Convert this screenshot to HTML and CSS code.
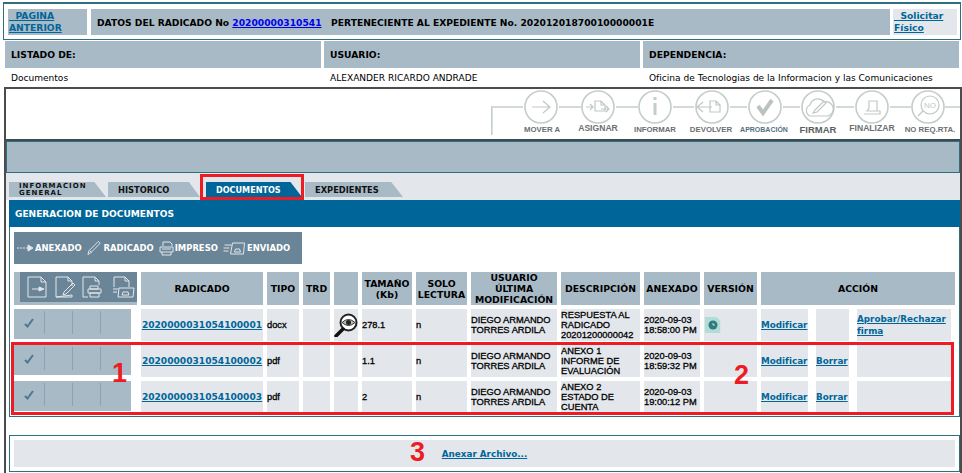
FILE: index.html
```html
<!DOCTYPE html>
<html lang="es">
<head>
<meta charset="utf-8">
<title>Documentos</title>
<link rel="stylesheet" href="styles.css">
</head>
<body>
<header class="top-box">
  <div class="top-cell nav-cell"><a href="#" class="link">&nbsp;&nbsp;PAGINA ANTERIOR</a></div>
  <div class="top-cell title-cell"><span>DATOS DEL RADICADO No <a href="#" class="blue-link">20200000310541</a>&nbsp;&nbsp; PERTENECIENTE AL EXPEDIENTE No. 20201201870010000001E</span></div>
  <div class="top-cell phys-cell"><a href="#" class="link">&nbsp;&nbsp;Solicitar Físico</a></div>
</header>
<section class="meta">
  <div class="meta-head">LISTADO DE:</div>
  <div class="meta-head">USUARIO:</div>
  <div class="meta-head">DEPENDENCIA:</div>
  <div class="meta-val">Documentos</div>
  <div class="meta-val">ALEXANDER RICARDO ANDRADE</div>
  <div class="meta-val">Oficina de Tecnologias de la Informacion y las Comunicaciones</div>
</section>
<main class="frame">
  <div class="toolbar">
    <svg class="tool-svg" width="469" height="50" viewBox="0 0 469 50">
      <g class="tl">
        <path d="M0.800 46V18H32M68 18H90M125 18H147M182 18H203M239 18H256M292 18H309M345 18H363M399 18H420M454 18H469"/>
        <circle cx="50" cy="18" r="16"/><circle cx="107" cy="18" r="16"/><circle cx="164" cy="18" r="16"/><circle cx="221" cy="18" r="16"/>
        <circle cx="274" cy="18" r="16"/><circle cx="327" cy="18" r="16"/><circle cx="381" cy="18" r="16"/><circle cx="437" cy="18" r="16"/>
      </g>
      <g class="ti">
        <path d="M41 18H58M52 12l7 6-7 6"/>
        <path d="M95 18h7M99 15l3 3-3 3M104 22V12h6l4 4v6zM110 12v4h4M110 20h7M115 17l3 3-3 3"/>
        <path d="M221 18h-14M212 13l-6 5 6 5M219 23V12h6l4 4v7zM225 12v4h4"/>
        <path class="heavy" d="M267 17l5 7 9-13"/>
        <path d="M319 27a6 6 0 0 1 0-11 8 8 0 0 1 14-3 6 6 0 0 1 4 14zM322 24l2-3 9-9 2 2-9 9z"/>
        <path d="M373 25h16v-3h-13l2-3v-7h8v10"/>
        <circle cx="439" cy="16" r="9"/><path d="M432 22l-5 5"/>
      </g>
      <rect class="info" x="162.500" y="14" width="3" height="12"/><rect class="info" x="162.500" y="8" width="3" height="3"/>
      <text class="no-txt" x="439" y="19">NO</text>
      <text class="tt" x="51" y="43">MOVER A</text>
      <text class="tt wider" x="107" y="42">ASIGNAR</text>
      <text class="tt" x="164" y="43">INFORMAR</text>
      <text class="tt" x="220" y="43">DEVOLVER</text>
      <text class="tt small" x="273" y="43">APROBACIÓN</text>
      <text class="tt big" x="327" y="44">FIRMAR</text>
      <text class="tt wider" x="381" y="42">FINALIZAR</text>
      <text class="tt" x="439" y="43">NO REQ.RTA.</text>
    </svg>
  </div>
  <div class="band"></div>
  <nav class="tabs">
    <a class="tab tab-a two-line">INFORMACION GENERAL</a>
    <a class="tab tab-b">HISTORICO</a>
    <a class="tab tab-c active">DOCUMENTOS</a>
    <a class="tab tab-d">EXPEDIENTES</a>
  </nav>
  <div class="panel">
    <h2 class="panel-title">GENERACION DE DOCUMENTOS</h2>
    <div class="panel-body">
      <div class="legend">
        <svg class="lg" width="17" height="14" viewBox="0 0 17 14"><path d="M0 7h11" stroke-dasharray="2 1"/><path class="fill" d="M11 4l5 3-5 3z"/></svg><span>ANEXADO</span>
        <svg class="lg" width="16" height="16" viewBox="0 0 17 16"><path d="M1 15l3-2 10-10-2-2L2 11zM3 11l2 2"/></svg><span>RADICADO</span>
        <svg class="lg" width="15" height="15" viewBox="0 0 15 15"><path d="M4 5V1h7l2 2v2M1 6h13v5H1zM3 11v3h9v-3M3 8h9"/></svg><span>IMPRESO</span>
        <svg class="lg" width="23" height="13" viewBox="0 0 22 13"><path d="M1 3h7M0 6h6M0 9h5M9 1h12l-1 11H7zM11 10l1-3h4l1 3z"/></svg><span>ENVIADO</span>
      </div>
      <table class="docs">
        <colgroup>
          <col class="c1"><col class="c2"><col class="c3"><col class="c4"><col class="c5"><col class="c6">
          <col class="c7"><col class="c8"><col class="c9"><col class="c10"><col class="c11"><col class="c12">
        </colgroup>
        <thead>
          <tr>
            <th class="state-head"><div class="state-icons">
              <svg class="si-a" width="20" height="22" viewBox="0 0 20 22"><path d="M1 1h13l5 5v15H1zM14 1v5h5M5 13h8"/><path class="fill" d="M12 11l5 2-5 2z"/></svg>
              <svg class="si-b" width="23" height="22" viewBox="0 0 23 22"><path d="M1 1h12l4 4v5M17 19v2H1zM1 1v20M13 1v4h4M8 19l3-1 9-9-2-2-9 9z"/></svg>
              <svg class="si-c" width="22" height="22" viewBox="0 0 22 22"><path d="M1 1v20h5M1 1h12l4 4v4M13 1v4h4M8 10h8v3H8zM6 13h13v4H6zM8 17h9v4H8z"/></svg>
              <svg class="si-d" width="23" height="22" viewBox="0 0 23 22"><path d="M2 11V1h11l4 4v6M13 1v4h4M1 13h5M1 16h4M7 12h15l-1 9H6zM10 19l1-3h5l1 3z"/></svg>
            </div></th>
            <th>RADICADO</th><th>TIPO</th><th>TRD</th><th></th><th>TAMAÑO (Kb)</th><th>SOLO LECTURA</th>
            <th>USUARIO ÚLTIMA MODIFICACIÓN</th><th>DESCRIPCIÓN</th><th>ANEXADO</th><th>VERSIÓN</th><th>ACCIÓN</th>
          </tr>
        </thead>
        <tbody>
          <tr>
            <td class="state"><div class="state-row"><span class="seg"><svg width="10" height="10" viewBox="0 0 10 10"><path d="M1 6l2.500 2.500L9 1"/></svg></span><span class="seg"></span><span class="seg"></span><span class="seg"></span></div></td>
            <td class="rad"><a href="#" class="link">2020000031054100001</a></td><td>docx</td><td></td>
            <td class="eye"><svg width="24" height="24" viewBox="0 0 24 24"><circle class="ring" cx="14.500" cy="9.500" r="8"/><path class="eye-l" d="M8 9.500q6.500-6 13 0q-6.500 6-13 0z"/><circle class="pupil" cx="14.500" cy="9.500" r="2.500"/><path class="handle" d="M9 16l-7 7"/></svg></td>
            <td>278.1</td><td>n</td><td>DIEGO ARMANDO TORRES ARDILA</td><td>RESPUESTA AL RADICADO 20201200000042</td><td>2020-09-03<br>18:58:00 PM</td>
            <td class="ver"><svg width="18" height="18" viewBox="0 0 18 20"><path class="v-doc" d="M0 1h13l4 4v14H0z"/><circle class="v-dot" cx="9" cy="10" r="5"/><path class="v-hand" d="M9 8v2h2"/></svg></td>
            <td class="actions"><div class="action-row"><span class="act a1"><a href="#" class="link">Modificar</a></span><span class="act a2"></span><span class="act a3"><a href="#" class="link">Aprobar/Rechazar firma</a></span></div></td>
          </tr>
          <tr>
            <td class="state"><div class="state-row"><span class="seg"><svg width="10" height="10" viewBox="0 0 10 10"><path d="M1 6l2.500 2.500L9 1"/></svg></span><span class="seg"></span><span class="seg"></span><span class="seg"></span></div></td>
            <td class="rad"><a href="#" class="link">2020000031054100002</a></td><td>pdf</td><td></td><td></td>
            <td>1.1</td><td>n</td><td>DIEGO ARMANDO TORRES ARDILA</td><td>ANEXO 1 INFORME DE EVALUACIÓN</td><td>2020-09-03<br>18:59:32 PM</td><td></td>
            <td class="actions"><div class="action-row"><span class="act a1"><a href="#" class="link">Modificar</a></span><span class="act a2"><a href="#" class="link">Borrar</a></span><span class="act a3"></span></div></td>
          </tr>
          <tr>
            <td class="state"><div class="state-row"><span class="seg"><svg width="10" height="10" viewBox="0 0 10 10"><path d="M1 6l2.500 2.500L9 1"/></svg></span><span class="seg"></span><span class="seg"></span><span class="seg"></span></div></td>
            <td class="rad"><a href="#" class="link">2020000031054100003</a></td><td>pdf</td><td></td><td></td>
            <td>2</td><td>n</td><td>DIEGO ARMANDO TORRES ARDILA</td><td>ANEXO 2 ESTADO DE CUENTA</td><td>2020-09-03<br>19:00:12 PM</td><td></td>
            <td class="actions"><div class="action-row"><span class="act a1"><a href="#" class="link">Modificar</a></span><span class="act a2"><a href="#" class="link">Borrar</a></span><span class="act a3"></span></div></td>
          </tr>
        </tbody>
      </table>
    </div>
    <div class="attach"><div class="attach-bar"><a href="#" class="link">Anexar Archivo...</a></div></div>
  </div>
</main>
<div class="mark tab-mark"></div>
<div class="mark rows-mark"></div>
<span class="num n1">1</span>
<span class="num n2">2</span>
<span class="num n3">3</span>
</body>
</html>
```
FILE: styles.css
```css
html, body { margin: 0; padding: 0; }
body {
  position: relative;
  width: 962px;
  height: 473px;
  overflow: hidden;
  background: #fff;
  color: #000;
  font-family: "DejaVu Sans", Verdana, sans-serif;
  font-size: 9.200px;
}
a { cursor: pointer; }
.link { color: #006699; font-weight: bold; text-decoration: underline; }
.blue-link { color: #0000ee; font-weight: bold; text-decoration: underline; }

.top-box {
  box-sizing: border-box;
  display: grid;
  grid-template-columns: 79px 799px 63px;
  column-gap: 4px;
  height: 38px;
  margin: 2px 1px 1px 3px;
  padding: 5px 0 4px 4px;
  border: 1px solid #2f6f7e;
  border-top: 2px solid #2f6f7e;
}
.top-cell { display: flex; align-items: center; font-weight: bold; background: #a8bac6; }
.nav-cell a, .phys-cell a { line-height: 12px; }
.title-cell { padding-left: 6px; white-space: nowrap; font-size: 9.170px; }
.phys-cell { background: #e3e7eb; padding-left: 1px; margin-left: -1px; }
.nav-cell { padding-left: 1px; }

.meta {
  display: grid;
  grid-template-columns: 316px 316px 316px;
  column-gap: 3px;
  grid-template-rows: 27px 19px;
  padding-left: 5px;
}
.meta-head { display: flex; align-items: center; padding-left: 6px; background: #a8bac6; font-weight: bold; }
.meta-val { display: flex; align-items: center; padding-left: 6px; font-size: 9.050px; }

.frame {
  box-sizing: border-box;
  height: 400px;
  margin: 0 0 0 4px;
  border: 2px solid #4c4c4c;
  border-bottom: 0;
}
.toolbar { display: flex; justify-content: flex-end; height: 50px; border-bottom: 2px solid #3e4a4f; }
.tool-svg { display: block; }
.tl path, .tl circle { fill: #fff; stroke: #c3cdc9; stroke-width: 1.600; }
.ti path, .ti circle { fill: none; stroke: #c0c8c6; stroke-width: 1.200; }
.ti .heavy { stroke-width: 4; stroke: #bac3c0; }
.info { fill: #c3cdc9; }
.no-txt { font: 8px "Liberation Sans", sans-serif; fill: #c0c8c6; text-anchor: middle; }
.tt { font: bold 7.800px "Liberation Sans", sans-serif; fill: #6b6f70; text-anchor: middle; }
.tt.wider { font-size: 8.600px; }
.tt.small { font-size: 7px; fill: #55707f; }
.tt.big { font-size: 9.500px; fill: #5a5f62; }

.band { box-sizing: border-box; height: 32px; background: #a8bac6; border: 1px solid #2f6f7e; }
.tabs {
  display: flex;
  align-items: flex-end;
  height: 27px;
  padding: 0 0 3px 3px;
  box-sizing: border-box;
  background: #e3e7eb;
}
.tab {
  display: flex;
  align-items: center;
  box-sizing: border-box;
  height: 15px;
  padding-left: 10px;
  background: #a8bac6;
  clip-path: polygon(0 0, 88% 0, 100% 100%, 0 100%);
  font-size: 8.300px;
  font-weight: bold;
  color: #111;
}
.two-line { font-size: 7px; line-height: 7px; letter-spacing: 1px; }
.tab-a { width: 97px; margin-right: 2px; }
.tab-b { width: 92px; margin-right: 6px; }
.tab-c { width: 96px; margin-right: 3px; background: #006699; color: #fff; font-size: 8.100px; }
.tab-d { width: 98px; }

.panel { margin-left: 3px; }
.panel-title {
  display: flex;
  align-items: center;
  height: 27px;
  margin: 0;
  padding-left: 6px;
  background: #006699;
  color: #fff;
  font-size: 9.050px;
  font-weight: bold;
}
.panel-body {
  box-sizing: border-box;
  width: 951px;
  padding-top: 5px;
  border: 1px solid #2f6f7e;
  border-top: 0;
}
.legend {
  display: flex;
  align-items: center;
  gap: 1px;
  width: 288px;
  height: 32px;
  margin: 0 0 0 4px;
  padding-left: 3px;
  box-sizing: border-box;
  background: #6a8597;
  color: #fff;
  font-size: 8.450px;
  font-weight: bold;
}
.legend span { margin-right: 4px; }
.lg { flex: none; }
.lg path { fill: none; stroke: #e3e7eb; stroke-width: 1; }
.lg .fill, .state-icons .fill { fill: #e3e7eb; }
.docs {
  table-layout: fixed;
  width: 949px;
  margin-top: 4px;
  border-spacing: 4px;
  border-collapse: separate;
}
.c1 { width: 123px; } .c2 { width: 122px; } .c3 { width: 32px; } .c4 { width: 27px; }
.c5 { width: 24px; } .c6 { width: 50px; } .c7 { width: 51px; } .c8 { width: 86px; }
.c9 { width: 79px; } .c10 { width: 56px; } .c11 { width: 53px; } .c12 { width: 194px; }
.docs th {
  height: 33px;
  padding: 0;
  background: #a8bac6;
  font-size: 9.300px;
  line-height: 11px;
  font-weight: bold;
}
.docs th.state-head { vertical-align: top; }
.docs td {
  height: 32px;
  padding: 0;
  background: #e3e7eb;
  font-family: "Liberation Sans", Arial, sans-serif;
  font-size: 9.300px;
  line-height: 10px;
  -webkit-text-stroke: 0.300px #000;
  vertical-align: middle;
}
.docs tbody tr:last-child td { height: 31px; }
.docs td .link { -webkit-text-stroke: 0; font-family: "DejaVu Sans", Verdana, sans-serif; }
.docs td.rad { text-align: center; }
.rad .link { font-size: 9.100px; }
.state-icons {
  display: flex;
  align-items: center;
  height: 30px;
  margin-left: 6px;
  padding-left: 7px;
  box-sizing: border-box;
  background: #6a8597;
}
.state-icons svg { flex: none; }
.si-b { margin-left: 8px; }
.si-c { margin-left: 4px; }
.si-d { margin-left: 8px; }
.state-icons path { fill: none; stroke: #e3e7eb; stroke-width: 1; }
.docs td.state { background: transparent; vertical-align: top; }
.state-row { display: grid; grid-template-columns: 31px 28px 28px 30px; width: 117px; height: 30px; background: #a8bac6; }
.seg { display: flex; align-items: center; justify-content: center; margin: 2px 0 5px; border-right: 1px solid #8ba3b3; }
.seg:last-child { border-right: 0; }
.seg svg path { fill: none; stroke: #4f7690; stroke-width: 2; }
.docs td.eye svg, .docs td.ver svg { display: block; }
.ring { fill: #fff; stroke: #222; stroke-width: 2; }
.eye-l { fill: #bbb; stroke: #333; }
.pupil { fill: #222; }
.handle { stroke: #111; stroke-width: 3.500; stroke-linecap: round; }
.v-doc { fill: #b4dcd6; }
.v-dot { fill: #2f7c80; }
.v-hand { fill: none; stroke: #cfe; stroke-width: 1; }
.docs td.actions { background: transparent; -webkit-text-stroke: 0; }
.action-row { display: flex; gap: 8px; width: 190px; height: 100%; min-height: 31px; }
.act { display: flex; align-items: center; background: #e3e7eb; font-family: "DejaVu Sans", sans-serif; }
.a1 { width: 47px; } .a2 { width: 33px; } .a3 { flex: 1; line-height: 12px; }
.action-row .link { font-size: 8.800px; }

.attach {
  box-sizing: border-box;
  width: 951px;
  height: 37px;
  margin-top: 18px;
  padding: 4px;
  border: 1px solid #2f6f7e;
}
.attach-bar { display: flex; align-items: center; justify-content: center; height: 27px; background: #e3e7eb; }
.attach-bar .link { font-size: 8.800px; }

.mark { position: absolute; box-sizing: border-box; border: 3px solid #ed1c24; }
.tab-mark { left: 200px; top: 174px; width: 104px; height: 26px; }
.rows-mark { left: 11px; top: 342px; width: 943px; height: 73px; }
.num { position: absolute; color: #ed1c24; font: bold 27px/27px "Liberation Sans", Arial, sans-serif; }
.n1 { left: 112px; top: 360px; }
.n2 { left: 734px; top: 362px; }
.n3 { left: 410px; top: 439px; }
```
